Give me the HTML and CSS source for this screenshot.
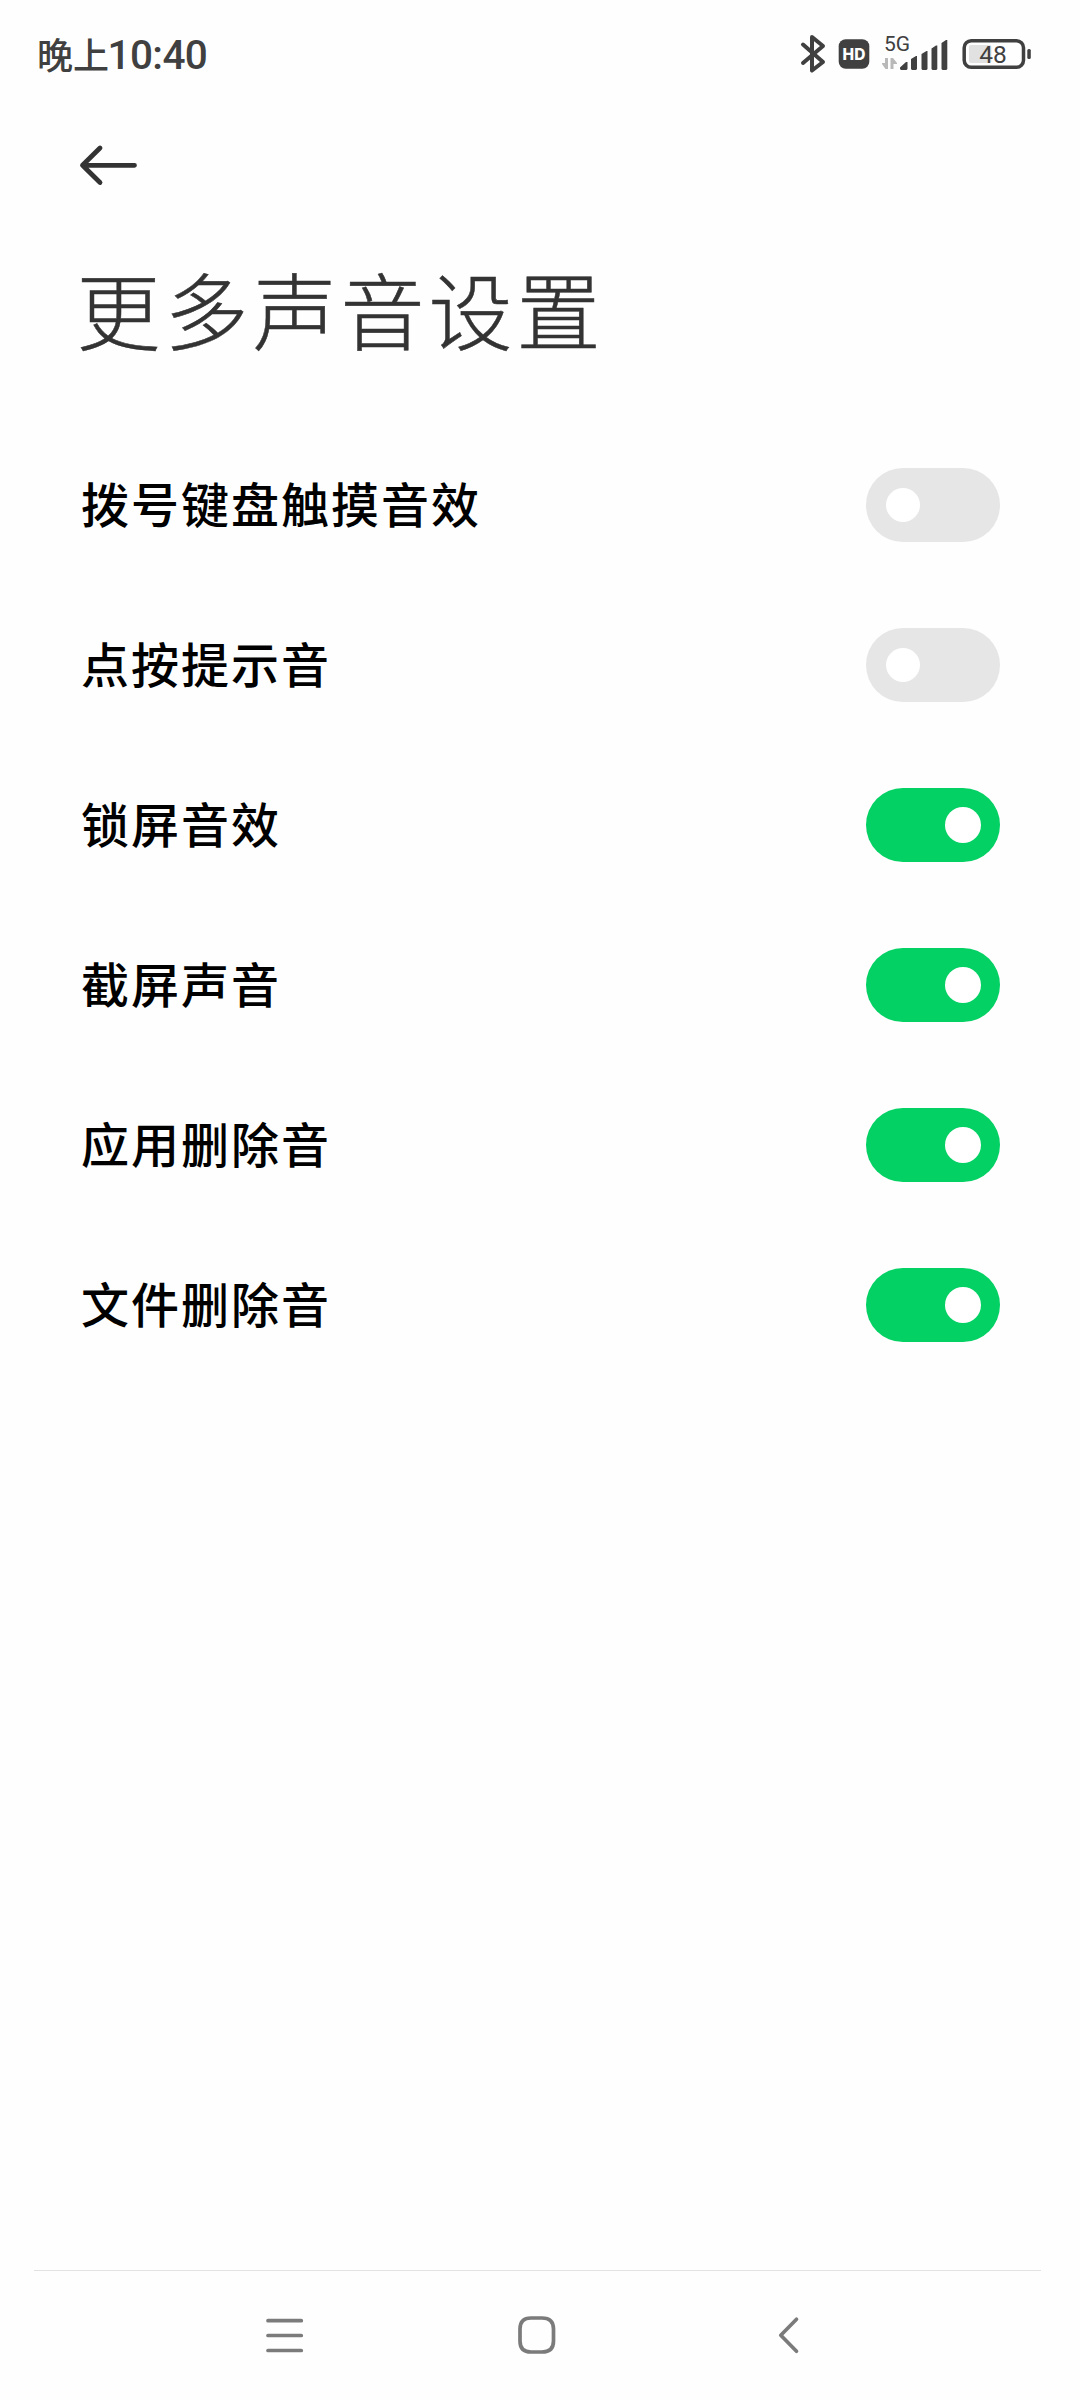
FILE: index.html
```html
<!DOCTYPE html>
<html lang="zh-CN">
<head>
<meta charset="utf-8">
<title>更多声音设置</title>
<link rel="stylesheet" href="styles.css">
</head>
<body>
<header class="status">
  <div class="time"><span>晚上</span><span class="digits">10:40</span></div>
  <svg class="indicators" width="240" height="50" viewBox="796 30 240 50">
    <path d="M803 44.500L823 62L812 70.500V37L823 46L803 63" fill="none" stroke="#404040" stroke-width="4" stroke-linecap="round" stroke-linejoin="round"/>
    <rect x="838.700" y="39.200" width="30.600" height="29.600" rx="7" fill="#404040"/>
    <text class="hd" x="854" y="59.500" text-anchor="middle">HD</text>
    <text class="net" x="884" y="51.300">5G</text>
    <path d="M888 58V69H885.500L882 64V63H885V58ZM890.500 69V58H893L897 63V64H893.500V69Z" fill="#b9b9b9"/>
    <path d="M900 69V67.500L906 62H907.500V69L906.500 70H901ZM911 69V59L916 56H917V69L916 70H912ZM921.500 69V54L926.500 51H927.500V69L926.500 70H922.500ZM931.500 69V48.500L936 45.500H937.300V69L936.300 70H932.500ZM941.500 69V43L946 40H947.300V69L946.300 70H942.500Z" fill="#404040"/>
    <rect x="969" y="45" width="22.500" height="18" rx="2" fill="#e1e1e1"/>
    <rect x="964.200" y="40.700" width="59.300" height="26.600" rx="7" fill="none" stroke="#404040" stroke-width="3.500"/>
    <rect x="1027.300" y="49" width="3.500" height="10" rx="1.500" fill="#404040"/>
    <text class="charge" x="993" y="62.700" text-anchor="middle">48</text>
  </svg>
</header>
<main class="page">
  <button class="back" aria-label="返回"><svg width="60" height="42" viewBox="78 144 60 42"><path d="M134.500 165.300H82.500M100 148L82.500 165.300L100 182.500" fill="none" stroke="#333" stroke-width="4.800" stroke-linecap="round" stroke-linejoin="round"/></svg></button>
  <h1 class="title">更多声音设置</h1>
  <ul class="list">
    <li class="row"><span class="label">拨号键盘触摸音效</span><span class="switch"></span></li>
    <li class="row"><span class="label">点按提示音</span><span class="switch"></span></li>
    <li class="row"><span class="label">锁屏音效</span><span class="switch on"></span></li>
    <li class="row"><span class="label">截屏声音</span><span class="switch on"></span></li>
    <li class="row"><span class="label">应用删除音</span><span class="switch on"></span></li>
    <li class="row"><span class="label">文件删除音</span><span class="switch on"></span></li>
  </ul>
</main>
<footer class="nav">
  <svg width="1007" height="128" viewBox="34 2272 1007 128" fill="none" stroke="#7b7b7b" stroke-width="3.700" stroke-linecap="round" stroke-linejoin="round"><path d="M268 2320.700H301.300M268 2335.500H301.300M268 2350.500H301.300"/><path d="M531 2318H542Q553.500 2318 553.500 2329V2341Q553.500 2352 542 2352H531Q520 2352 520 2341V2329Q520 2318 531 2318Z"/><path d="M796.500 2319.300L780.800 2335.200L796.500 2351.200"/></svg>
</footer>
</body>
</html>
```
FILE: styles.css
```css
body { margin: 0; width: 1080px; height: 2400px; display: flex; flex-direction: column; background: #fefefe; font-family: "Noto Sans CJK SC", sans-serif; }
.status { height: 110px; padding: 0 44px 0 37px; display: flex; justify-content: space-between; align-items: center; color: #404040; box-sizing: border-box; }
.time { font-size: 36px; line-height: 50px; font-weight: 500; display: flex; align-items: baseline; padding-bottom: 3px; }
.digits { font-family: Roboto, sans-serif; font-size: 40.5px; letter-spacing: -0.6px; margin-left: -1.5px; }
.indicators { font-family: Inter, sans-serif; }
.hd { font-size: 15.5px; font-weight: 800; fill: #fff; }
.net { font-family: Roboto, sans-serif; font-size: 21px; fill: #404040; }
.charge { font-family: Roboto, sans-serif; font-size: 24.5px; fill: #404040; }
.page { flex: 1; padding: 34px 80px 0 78px; }
.back { display: block; border: 0; padding: 0; background: none; height: 42px; }
.title { margin: 57px 0 0 -1.5px; font-size: 84px; line-height: 130px; font-weight: 300; letter-spacing: 4px; color: #333; -webkit-text-stroke: 0.5px #333; }
.list { list-style: none; margin: 52px 0 0; padding: 0; }
.row { height: 160px; display: flex; align-items: center; justify-content: space-between; padding-left: 3px; }
.label { font-size: 48px; font-weight: 500; letter-spacing: 2px; color: #000; padding-bottom: 7px; }
.switch { width: 134px; height: 74px; box-sizing: border-box; border-radius: 37px; background: #e6e6e6; padding: 0 19px 0 20px; display: flex; align-items: center; }
.switch::before { content: ""; width: 34px; height: 34px; border-radius: 50%; background: #fff; }
.switch.on { background: #03d163; justify-content: flex-end; }
.switch.on::before { width: 36px; height: 36px; }
.nav { height: 129px; margin: 0 39px 0 34px; border-top: 1px solid #e2e2e2; }
.nav svg { display: block; padding-top: 1px; }
```
